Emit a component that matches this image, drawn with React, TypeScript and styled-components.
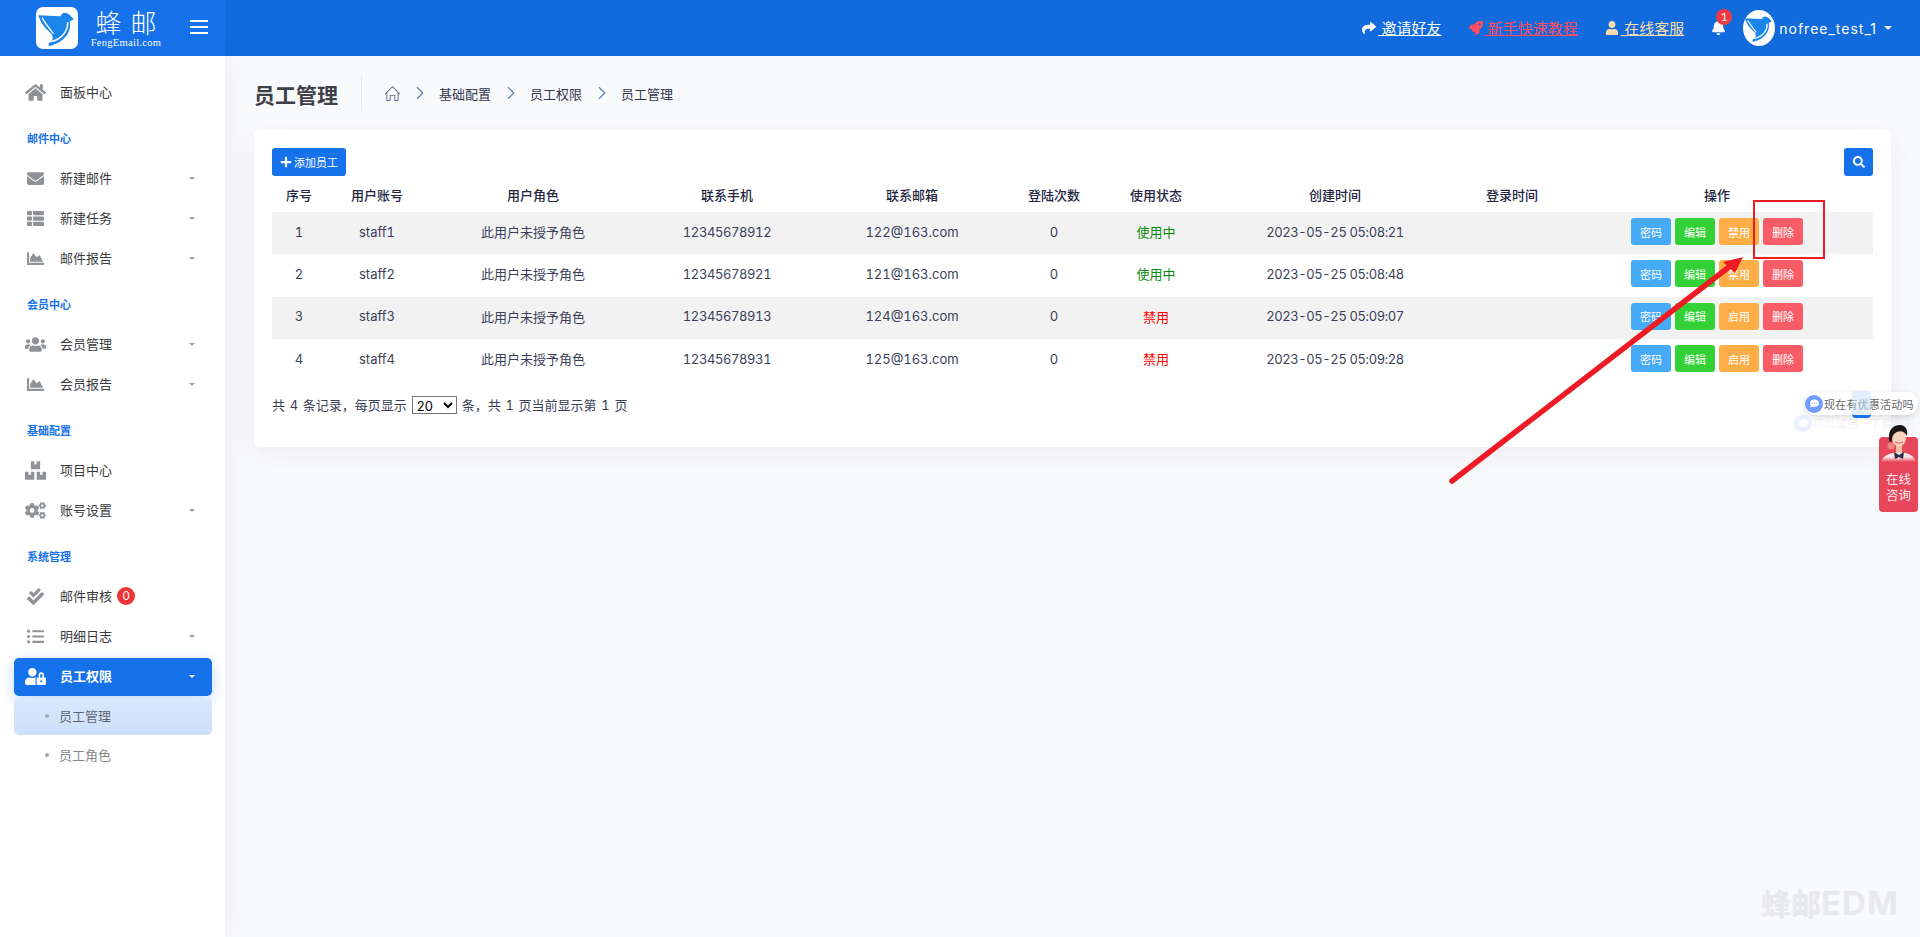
import React from "react";
import styled, { createGlobalStyle } from "styled-components";
import {
  FaHome, FaEnvelope, FaThList, FaChartArea, FaUsers, FaBoxes, FaCogs, FaCheckDouble, FaListUl,
  FaUserLock, FaShare, FaRocket, FaUser, FaBell, FaSearch, FaPlus, FaCommentDots,
} from "react-icons/fa";
import { SlHome } from "react-icons/sl";
import { LuChevronRight } from "react-icons/lu";

const Global = createGlobalStyle`
  html, body { margin: 0; padding: 0; height: 100%; background: #f9fafc; }
  body { font-family: Inter, "Noto Sans CJK SC", sans-serif; font-size: 13px; overflow: hidden; font-feature-settings: "tnum"; }
  * { box-sizing: border-box; }
`;

const Page = styled.div`
  position: relative; width: 1920px; height: 937px; overflow: hidden;
  display: flex; flex-direction: column; background: #f9fafc;
`;
const Header = styled.header`
  height: 56px; flex: none; display: flex; align-items: center; background: #126bdc; color: #fff;
`;
const Brand = styled.div`
  width: 225px; height: 56px; flex: none; display: flex; align-items: center;
  padding-left: 36px; background: #1672ea;
`;
const BrandText = styled.div`
  margin-left: 10px; width: 76px; height: 42px; display: flex; flex-direction: column; align-items: center;
`;
const BrandName = styled.div`
  font-size: 26px; line-height: 30px; font-weight: 300; letter-spacing: 9px; margin-right: -9px; white-space: nowrap;
  font-family: "Noto Sans CJK SC", sans-serif;
`;
const BrandUrl = styled.div`
  font-family: "Liberation Serif", serif; font-size: 10.5px; line-height: 11px; letter-spacing: 0.3px; white-space: nowrap;
  font-feature-settings: normal;
`;
const Burger = styled.button`
  margin: 0 0 2px 26px; width: 18px; height: 14px; padding: 0; border: 0; background: none;
  border-top: 2px solid #fff; border-bottom: 2px solid #fff; position: relative;
  &::after { content: ""; position: absolute; left: 0; right: 0; top: 4px; height: 2px; background: #fff; }
`;
const HeaderRight = styled.nav`
  margin-left: auto; display: flex; align-items: center; padding-right: 28px;
`;
const TopLink = styled.a<{ $color: string; $ml: number }>`
  display: flex; align-items: center; color: ${(p) => p.$color}; margin-left: ${(p) => p.$ml}px;
  font-size: 15px; line-height: 20px; white-space: nowrap;
  span { text-decoration: underline; white-space: pre; font-family: "Noto Sans CJK SC", sans-serif; }
  svg { font-size: 14px; flex: none; margin-right: 2px; }
`;
const BellWrap = styled.div`
  position: relative; margin-left: 27px; width: 15px; height: 16px; font-size: 15px; display: flex;
`;
const BellBadge = styled.span`
  position: absolute; left: 5px; top: -11px; width: 16px; height: 16px; border-radius: 50%;
  background: #ef3a42; color: #fff; font-size: 11px; line-height: 16px; text-align: center;
`;
const AvatarCircle = styled.div`
  margin-left: 17px; width: 32px; height: 36px; border-radius: 50%; background: #fff; overflow: hidden;
  display: flex; align-items: center; justify-content: center; flex: none;
`;
const UserName = styled.div`
  margin-left: 4px; font-size: 14px; letter-spacing: 1px; white-space: nowrap; font-feature-settings: normal;
`;
const Caret = styled.i<{ $color: string; $size: number; $auto?: boolean }>`
  display: block; width: 0; height: 0; flex: none; margin-left: ${(p) => (p.$auto ? "auto" : "7px")};
  border-left: ${(p) => p.$size}px solid transparent; border-right: ${(p) => p.$size}px solid transparent;
  border-top: ${(p) => p.$size}px solid ${(p) => p.$color};
`;

const Body = styled.div`
  flex: 1; display: flex; min-height: 0;
`;
const Sidebar = styled.aside`
  width: 225px; flex: none; background: #fff; padding-top: 16px;
  box-shadow: 0 0 28px rgba(82, 63, 105, 0.08); position: relative; z-index: 1;
`;
const SideLabel = styled.div`
  height: 46px; padding: 20px 0 0 27px; font-size: 11px; line-height: 15px; font-weight: 700; color: #1672ea;
`;
const SideItem = styled.div<{ $active?: boolean }>`
  height: ${(p) => (p.$active ? 38 : 40)}px; margin: ${(p) => (p.$active ? "2px 13px 0 14px" : "0 13px 0 14px")};
  padding: 0 17px ${(p) => (p.$active ? 2 : 0)}px 13px; display: flex; align-items: center; border-radius: 5px;
  background: ${(p) => (p.$active ? "#1672ea" : "transparent")};
  color: ${(p) => (p.$active ? "#fff" : "#3a3b40")};
  font-weight: ${(p) => (p.$active ? 700 : 400)};
  box-shadow: ${(p) => (p.$active ? "0 4px 14px rgba(22,114,234,.28)" : "none")};
`;
const SideIcon = styled.span<{ $active?: boolean; $wide?: boolean }>`
  width: 33px; flex: none; display: flex; font-size: ${(p) => (p.$wide ? 21 : 17)}px;
  color: ${(p) => (p.$active ? "#fff" : "#8f9296")};
  svg { display: block; margin-left: ${(p) => (p.$wide ? -2 : 0)}px; }
`;
const SideText = styled.span`
  white-space: nowrap; line-height: 16px; margin-bottom: 1px;
`;
const CountBadge = styled.span`
  margin-left: 5px; width: 18px; height: 18px; border-radius: 50%; background: #f03436; color: #fff;
  font-size: 12px; line-height: 18px; text-align: center;
`;
const SubItem = styled.div<{ $active?: boolean }>`
  height: 37px; margin: 2px 13px 0 14px; padding: 0 0 2px 31px; display: flex; align-items: center; border-radius: 5px;
  background: ${(p) => (p.$active ? "linear-gradient(#d9e7fb, #cde0fa)" : "transparent")};
  color: ${(p) => (p.$active ? "#5d6675" : "#85878c")};
  &::before { content: ""; width: 4px; height: 4px; border-radius: 50%; background: #a4a8ae; margin-right: 10px; }
`;

const Main = styled.main`
  flex: 1; min-width: 0; padding: 0 29px;
`;
const TitleRow = styled.div`
  height: 74px; display: flex; align-items: center;
`;
const Title = styled.h1`
  margin: 0; width: 108px; height: 36px; border-right: 1px solid #e8e9ee; font-size: 21px; line-height: 41px;
  font-weight: 700; color: #3f4047; white-space: nowrap;
`;
const Crumbs = styled.div`
  margin-left: 23px; display: flex; align-items: center; color: #33344f; font-size: 13px;
  svg.home { font-size: 15px; color: #5b6b85; }
  svg.sep { font-size: 22px; color: #5b7fa8; margin: 0 8.5px; stroke-width: 1.2; }
`;
const Card = styled.section`
  background: #fff; border-radius: 6px; padding: 18px 18px 33px; box-shadow: 0 6px 26px rgba(82, 63, 105, 0.07);
`;
const Toolbar = styled.div`
  display: flex; justify-content: space-between;
`;
const PrimaryButton = styled.button`
  height: 28px; width: 74px; padding: 0 8px; border: 0; border-radius: 3px; background: #1672ea; color: #fff; font: inherit; font-size: 11px;
  display: flex; align-items: center; gap: 2px; white-space: nowrap; svg { font-size: 12px; flex: none; }
`;
const SearchButton = styled(PrimaryButton)`
  width: 29px; padding: 0; justify-content: center;
`;
const Table = styled.table`
  width: 100%; border-collapse: collapse; table-layout: fixed; color: #3c3f58; font-size: 13px;
  th { height: 36px; padding: 0; font-weight: 500; color: #24263f; text-align: center; }
  td { height: 42.3px; padding: 0 0 3px; text-align: center; vertical-align: middle; }
  th:last-child, td:last-child { padding-right: 5px; }
  tbody tr:nth-child(odd) { background: #f2f2f2; }
`;
const Tight = styled.span`
  letter-spacing: -0.4px;
`;
const Status = styled.span<{ $on: boolean }>`
  color: ${(p) => (p.$on ? "#0a8a0a" : "#ff0000")};
`;
const ActionRow = styled.div`
  display: flex; justify-content: center; gap: 4px;
`;
const ActionButton = styled.button<{ $bg: string }>`
  width: 40px; height: 27px; padding: 0; border: 0; border-radius: 3px; background: ${(p) => p.$bg}; color: #fff;
  font: inherit; font-size: 11px;
`;
const Footer = styled.div`
  margin-top: 15px; display: flex; align-items: center; color: #3c3f58; font-size: 13px; line-height: 18px; white-space: pre; word-spacing: 1.2px;
`;
const PageSelect = styled.select`
  width: 45px; height: 18px; margin: 0 5px; padding: 0; font-family: Inter, sans-serif; font-size: 13px; background: #fff;
  border: 1px solid #767676; color: #000;
`;

/* overlays that lie over the page */
const Annotation = styled.svg`
  position: absolute; left: 0; top: 0; width: 1920px; height: 937px; pointer-events: none; z-index: 3;
`;
const Watermark = styled.div`
  position: absolute; left: 1761px; top: 884px; font-size: 30px; line-height: 38px; font-weight: 900; color: #e8e9ec;
  white-space: nowrap; z-index: 2; display: flex; align-items: baseline;
`;
const WatermarkLatin = styled.span`
  font-size: 33px; font-weight: 700; letter-spacing: 1px; font-feature-settings: normal;
`;
const ChatBubble = styled.div`
  position: absolute; left: 1805px; top: 392px; width: 113px; height: 23px; border-radius: 12px; background: rgba(255,255,255,.92);
  box-shadow: 0 2px 6px rgba(0,0,0,.16); display: flex; align-items: center; gap: 1px; z-index: 4;
  color: #666; font-size: 11px; letter-spacing: .2px; white-space: nowrap; font-family: "Noto Sans CJK SC", sans-serif;
`;
const ChatDot = styled.span<{ $faded?: boolean }>`
  width: 18px; height: 18px; border-radius: 50%; flex: none; color: #fff; font-size: 9px;
  background: ${(p) => (p.$faded ? "#e9f0ff" : "#6f9dff")}; display: flex; align-items: center; justify-content: center;
`;
const ChatFaded = styled.div`
  position: absolute; left: 1794px; top: 414px; display: flex; align-items: center; gap: 1px; z-index: 3;
  color: #f1f3f7; font-size: 11px; letter-spacing: .4px; white-space: nowrap; font-family: "Noto Sans CJK SC", sans-serif;
`;
const ChatTab = styled.div`
  position: absolute; left: 1852px; top: 391px; width: 19px; height: 27px; border-radius: 4px;
  background: rgba(200, 224, 250, .55); border-bottom: 3px solid #1672ea; z-index: 5;
`;
const Consult = styled.div`
  position: absolute; left: 1879px; top: 437px; width: 39px; height: 75px; border-radius: 4px; background: #e8465a;
  color: #fde8ea; font-size: 12.5px; line-height: 16px; text-align: center; padding-top: 34px; z-index: 4;
  font-family: "Noto Sans CJK SC", sans-serif;
`;
const Agent = styled.svg`
  position: absolute; left: 1880px; top: 424px; width: 37px; height: 38px; z-index: 5;
`;

const Bird = ({ size }: { size: number }) => (
  <svg width={size} height={size} viewBox="0 0 41 41">
    <path d="M2.3 8 L24 9 C25 6 28 5 30 6 C33 7 35 10 37 12 L33 14 C35 24 28 35 13 38 C12 37 12 36 13 35 C17 33 17 29 15 26 C10 22 4 15 2.3 8Z" fill="#1a86ec" />
    <path d="M6 10.5 C9 16 13 21 17 26" fill="none" stroke="#fff" strokeWidth="1.5" />
    <path d="M31 15 C31 24 25 31 15 34" fill="none" stroke="#fff" strokeWidth="1.6" />
  </svg>
);
const LogoMark = styled.div`
  width: 42px; height: 42px; border-radius: 7px; background: #fff; flex: none; display: flex;
`;

type Nav = { kind: "label"; text: string } | { kind: "item"; text: string; icon: React.ReactNode; wide?: boolean; caret?: boolean; badge?: string };
const NAV: Nav[] = [
  { kind: "item", text: "面板中心", icon: <FaHome />, wide: true },
  { kind: "label", text: "邮件中心" },
  { kind: "item", text: "新建邮件", icon: <FaEnvelope />, caret: true },
  { kind: "item", text: "新建任务", icon: <FaThList />, caret: true },
  { kind: "item", text: "邮件报告", icon: <FaChartArea />, caret: true },
  { kind: "label", text: "会员中心" },
  { kind: "item", text: "会员管理", icon: <FaUsers />, wide: true, caret: true },
  { kind: "item", text: "会员报告", icon: <FaChartArea />, caret: true },
  { kind: "label", text: "基础配置" },
  { kind: "item", text: "项目中心", icon: <FaBoxes />, wide: true },
  { kind: "item", text: "账号设置", icon: <FaCogs />, wide: true, caret: true },
  { kind: "label", text: "系统管理" },
  { kind: "item", text: "邮件审核", icon: <FaCheckDouble />, badge: "0" },
  { kind: "item", text: "明细日志", icon: <FaListUl />, caret: true },
];

const COLS = [54, 102, 210, 178, 192, 92, 112, 246, 108, 307];
const HEAD = ["序号", "用户账号", "用户角色", "联系手机", "联系邮箱", "登陆次数", "使用状态", "创建时间", "登录时间", "操作"];
const ROWS = [
  { id: 1, user: "staff1", phone: "12345678912", mail: "122@163.com", on: true, time: "2023-05-25 05:08:21" },
  { id: 2, user: "staff2", phone: "12345678921", mail: "121@163.com", on: true, time: "2023-05-25 05:08:48" },
  { id: 3, user: "staff3", phone: "12345678913", mail: "124@163.com", on: false, time: "2023-05-25 05:09:07" },
  { id: 4, user: "staff4", phone: "12345678931", mail: "125@163.com", on: false, time: "2023-05-25 05:09:28" },
];

export default function App() {
  return (
    <Page>
      <Global />
      <Header>
        <Brand>
          <LogoMark><Bird size={42} /></LogoMark>
          <BrandText>
            <BrandName>蜂邮</BrandName>
            <BrandUrl>FengEmail.com</BrandUrl>
          </BrandText>
          <Burger aria-label="menu" />
        </Brand>
        <HeaderRight>
          <TopLink $color="#fff" $ml={0}><FaShare /><span> 邀请好友</span></TopLink>
          <TopLink $color="#ff4d5e" $ml={27}><FaRocket /><span> 新手快速教程</span></TopLink>
          <TopLink $color="#f7dcae" $ml={27}><FaUser /><span> 在线客服</span></TopLink>
          <BellWrap><FaBell /><BellBadge>1</BellBadge></BellWrap>
          <AvatarCircle><Bird size={32} /></AvatarCircle>
          <UserName>nofree_test_1</UserName>
          <Caret $color="#fff" $size={4} />
        </HeaderRight>
      </Header>
      <Body>
        <Sidebar>
          {NAV.map((n) =>
            n.kind === "label" ? (
              <SideLabel key={n.text}>{n.text}</SideLabel>
            ) : (
              <SideItem key={n.text}>
                <SideIcon $wide={n.wide}>{n.icon}</SideIcon>
                <SideText>{n.text}</SideText>
                {n.badge && <CountBadge>{n.badge}</CountBadge>}
                {n.caret && <Caret $color="#9a9da2" $size={3} $auto />}
              </SideItem>
            )
          )}
          <SideItem $active>
            <SideIcon $active $wide><FaUserLock /></SideIcon>
            <SideText>员工权限</SideText>
            <Caret $color="#fff" $size={3} $auto />
          </SideItem>
          <SubItem $active>员工管理</SubItem>
          <SubItem>员工角色</SubItem>
        </Sidebar>
        <Main>
          <TitleRow>
            <Title>员工管理</Title>
            <Crumbs>
              <SlHome className="home" />
              <LuChevronRight className="sep" />
              <span>基础配置</span>
              <LuChevronRight className="sep" />
              <span>员工权限</span>
              <LuChevronRight className="sep" />
              <span>员工管理</span>
            </Crumbs>
          </TitleRow>
          <Card>
            <Toolbar>
              <PrimaryButton><FaPlus />添加员工</PrimaryButton>
              <SearchButton aria-label="search"><FaSearch /></SearchButton>
            </Toolbar>
            <Table>
              <colgroup>{COLS.map((w, i) => <col key={i} style={{ width: w }} />)}</colgroup>
              <thead>
                <tr>{HEAD.map((h) => <th key={h}>{h}</th>)}</tr>
              </thead>
              <tbody>
                {ROWS.map((r) => (
                  <tr key={r.id}>
                    <td>{r.id}</td>
                    <td>{r.user}</td>
                    <td>此用户未授予角色</td>
                    <td><Tight>{r.phone}</Tight></td>
                    <td>{r.mail}</td>
                    <td>0</td>
                    <td><Status $on={r.on}>{r.on ? "使用中" : "禁用"}</Status></td>
                    <td><Tight>{r.time}</Tight></td>
                    <td></td>
                    <td>
                      <ActionRow>
                        <ActionButton $bg="#46aaf7">密码</ActionButton>
                        <ActionButton $bg="#33d136">编辑</ActionButton>
                        <ActionButton $bg="#ffae47">{r.on ? "禁用" : "启用"}</ActionButton>
                        <ActionButton $bg="#f85c66">删除</ActionButton>
                      </ActionRow>
                    </td>
                  </tr>
                ))}
              </tbody>
            </Table>
            <Footer>
              共 4 条记录，每页显示
              <PageSelect defaultValue="20">
                <option>10</option>
                <option>20</option>
                <option>50</option>
              </PageSelect>
              条，共 1 页当前显示第 1 页
            </Footer>
          </Card>
        </Main>
      </Body>

      <Annotation viewBox="0 0 1920 937">
        <rect x="1754" y="201" width="70" height="57" fill="none" stroke="#ed1c24" strokeWidth="2" />
        <path d="M1452 481 L1729 267" stroke="#ed1c24" strokeWidth="5.5" strokeLinecap="round" />
        <path d="M1743 257 L1723 262 L1735 273 Z" fill="#ed1c24" />
      </Annotation>
      <Watermark>蜂邮<WatermarkLatin>EDM</WatermarkLatin></Watermark>
      <ChatFaded><ChatDot $faded><FaCommentDots /></ChatDot>可以试用一下套餐吗</ChatFaded>
      <ChatBubble><ChatDot><FaCommentDots /></ChatDot>现在有优惠活动吗</ChatBubble>
      <ChatTab />
      <Consult>在线<br />咨询</Consult>
      <Agent viewBox="0 0 37 38">
        <defs>
          <linearGradient id="shirt" x1="0" y1="0" x2="0" y2="1">
            <stop offset="0.5" stopColor="#f7e6e8" />
            <stop offset="1" stopColor="#f7e6e8" stopOpacity="0" />
          </linearGradient>
        </defs>
        <path d="M1 38 C3 31 10 29 19 28 C28 29 34 31 36 38 Z" fill="url(#shirt)" />
        <path d="M14 28 L19 31 L24 28 L23 35 L19 33 L15 35 Z" fill="#2b2a44" />
        <rect x="16" y="21" width="6" height="8" fill="#efc0a8" />
        <ellipse cx="19" cy="14" rx="7" ry="8.5" fill="#f6d2bd" />
        <path d="M9 15 C8 5 14 1 20 1 C26 1 28 6 27 12 C25 8 21 6 17 8 C14 9 12 12 12 17 C11 19 9 18 9 15 Z" fill="#1b1718" />
        <circle cx="11" cy="22" r="3.5" fill="#e8867f" />
        <path d="M15 18 Q19 20.5 23 18" fill="none" stroke="#d9656c" strokeWidth="1" />
      </Agent>
    </Page>
  );
}
